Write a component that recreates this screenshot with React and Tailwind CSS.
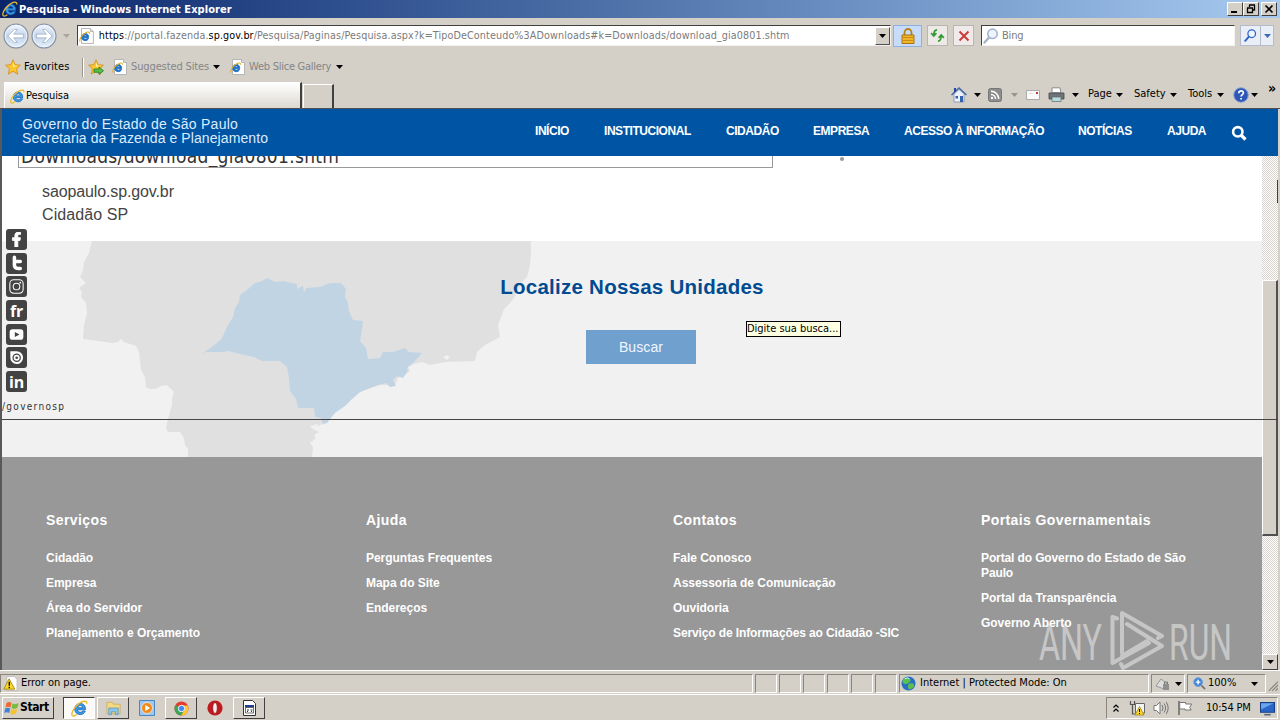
import clsx from "clsx"
import { FaFacebookF } from "react-icons/fa"

const ui = "font-['DejaVu_Sans_Condensed','DejaVu_Sans',sans-serif]"

const IeLogo = ({ className }) => (
  <svg viewBox="0 0 16 16" className={className}>
    <path d="M13.6 9.2H6.2c.2 1.500 1.300 2.300 2.600 2.300 1 0 1.700-.4 2.200-1.100h2.400c-.8 2.200-2.500 3.300-4.700 3.300-3 0-5.200-2.100-5.200-5.200S5.800 3.200 8.700 3.200c3.200 0 5.100 2.500 4.900 6zM6.300 7.300h4.800c-.2-1.300-1.100-2.100-2.400-2.100-1.300 0-2.200.8-2.400 2.100z" fill="#3a9ae6" stroke="#1b66b8" strokeWidth=".8" />
    <path d="M1.200 14.600C-.3 12.500 3 6.600 7.800 3.200 11.500.6 15.200.2 14.800 3.500" fill="none" stroke="#e8b92c" strokeWidth="1.300" />
    <path d="M1.200 14.600c1 .9 2.800.1 4.200-.9" fill="none" stroke="#e8b92c" strokeWidth="1.300" />
  </svg>
)

const PageLogo = ({ className }) => (
  <svg viewBox="0 0 16 16" className={className}>
    <path d="M2.500 .5h9l3 3v12h-12z" fill="#fff" stroke="#b5b5b5" />
    <path d="M11.500 .5v3h3" fill="#dde" stroke="#b5b5b5" />
    <path d="M9.700 9.600H4.600c.2 1 .9 1.600 1.800 1.600.7 0 1.200-.3 1.500-.8h1.700c-.6 1.500-1.800 2.300-3.300 2.300-2.100 0-3.700-1.500-3.700-3.600s1.600-3.700 3.700-3.700c2.200 0 3.600 1.800 3.400 4.200zM4.700 8.300h3.200c-.2-.9-.8-1.400-1.600-1.400S4.900 7.400 4.700 8.300z" fill="#1c6fc4" stroke="#1c6fc4" strokeWidth=".9" />
    <path d="M1 13.500C0 11.500 2.500 7.500 6 5.200c2.600-1.700 4.800-1.600 4.500.6" fill="none" stroke="#e3b022" strokeWidth="1.100" />
  </svg>
)

const Caret = ({ className = "text-black" }) => (
  <svg viewBox="0 0 7 4" className={clsx("w-[7px] h-[4px] shrink-0", className)}>
    <path d="M0 0h7L3.500 4z" fill="currentColor" />
  </svg>
)

const NavArrow = ({ flip }) => (
  <svg viewBox="0 0 24 24" className={clsx("size-[26px] shrink-0", flip && "rotate-180")}>
    <defs>
      <linearGradient id={flip ? "nf" : "nb"} x1="0" y1={flip ? "1" : "0"} x2="0" y2={flip ? "0" : "1"}>
        <stop offset="0" stopColor="#f4f8fd" />
        <stop offset=".5" stopColor="#c3d4ea" />
        <stop offset="1" stopColor="#e4f1fb" />
      </linearGradient>
    </defs>
    <circle cx="12" cy="12" r="11" fill={flip ? "url(#nf)" : "url(#nb)"} stroke="#8793a6" strokeWidth="1.200" />
    <circle cx="12" cy="12" r="10" fill="none" stroke="#f3f8ff" strokeWidth=".8" />
    <path d="M4.500 12l6-6h2.800L9.800 10.300h9v3.400h-9l3.500 4.300h-2.800z" fill="#fff" stroke="#8fa3bf" strokeWidth=".6" />
  </svg>
)

const Star = ({ className, add }) => (
  <svg viewBox="0 0 16 16" className={className}>
    <path d="M8 .8l2.200 4.900 5.200.5-3.900 3.600 1.200 5.300L8 12.300l-4.700 2.800 1.200-5.300L.6 6.200l5.200-.5z" fill="#fcc62f" stroke="#d48a14" strokeWidth=".8" />
    <path d="M8 3l1.400 3.400 3 .4L8 8z" fill="#fff0a0" />
    {add && <path d="M6 10h5V8l4.500 3.700L11 15.500v-2.300H6z" fill="#58c045" stroke="#217a1c" strokeWidth=".8" />}
  </svg>
)

const Lens = ({ className }) => (
  <svg viewBox="0 0 16 16" className={className}>
    <circle cx="9.500" cy="5.800" r="4.700" fill="#eef5ff" stroke="currentColor" strokeWidth="1.600" />
    <path d="M6 9.500L1.500 14.500" stroke="currentColor" strokeWidth="2.400" strokeLinecap="round" />
  </svg>
)

const TitleBar = () => (
  <div className={clsx(ui, "h-[18px] flex items-center pl-[2px] pr-[3px] bg-gradient-to-r from-[#0a246a] to-[#a6caf0]")}>
    <IeLogo className="size-4" />
    <p className="ml-[1px] text-[11px] leading-[17px] font-bold text-white tracking-[0.06px] whitespace-nowrap grow">Pesquisa - Windows Internet Explorer</p>
    {["min", "max", "close"].map((b) => (
      <div key={b} className={clsx("w-4 h-[14px] bg-[#d4d0c8] border border-t-white border-l-white border-r-[#404040] border-b-[#404040]", b === "close" && "ml-[2px]")}>
        <svg viewBox="0 0 14 12" className="block w-[14px] h-[12px]" fill="none" stroke="#000">
          {b === "min" && <path d="M3 9h6" strokeWidth="2" />}
          {b === "max" && <path d="M5 2h6M5.500 2v2M10.500 2v5H9M3 5h6M3.500 5v4.500h5V5" strokeWidth="1.300" />}
          {b === "close" && <path d="M3.500 2.500l7 7M10.500 2.500l-7 7" strokeWidth="1.700" />}
        </svg>
      </div>
    ))}
  </div>
)

const AddressBar = () => (
  <div className={clsx(ui, "h-[35px] flex items-center pl-[2px] text-[11px]")}>
    <div className="flex w-[58px] gap-[2px] pl-px"><NavArrow /><NavArrow flip /></div>
    <div className="w-[12px] flex justify-center"><Caret className="text-[#aaa59c]" /></div>
    <div className="w-[814px] h-[21px] ml-[5px] flex items-center bg-white border border-t-[#404040] border-l-[#404040] border-[#f4f2ee]">
      <PageLogo className="size-4 ml-[1px]" />
      <p className="ml-[4px] pt-px w-[783px] text-[10.700px] text-[#7b7b7b] tracking-[0.110px] whitespace-nowrap">
        <span className="text-black">https</span>://portal.fazenda.<span className="text-black">sp.gov.br</span>/Pesquisa/Paginas/Pesquisa.aspx?k=TipoDeConteudo%3ADownloads#k=Downloads/download_gia0801.shtm
      </p>
      <div className="w-[15px] h-[18px] shrink-0 flex items-center justify-center bg-[#d4d0c8] border border-t-white border-l-white border-r-[#505050] border-b-[#505050]"><Caret /></div>
    </div>
    <div className="w-[29px] h-[22px] ml-[2px] flex items-center justify-center bg-[#c6dcfa] border border-[#8eb1e2]">
      <svg viewBox="0 0 14 16" className="w-[14px] h-4">
        <path d="M3.500 8V4.500a3.500 3.500 0 017 0V8" fill="none" stroke="#b98212" strokeWidth="1.800" />
        <path d="M1 7h12v8.500H1z" fill="#f0b52b" stroke="#a9720c" />
        <path d="M1.500 9.500h11M1.500 12.500h11" stroke="#c98d18" />
      </svg>
    </div>
    <div className="w-[21px] h-[21px] ml-[5px] flex items-center justify-center bg-[#ece9e6] border border-[#b9b6b2]">
      <svg viewBox="0 0 16 16" className="size-[15px]" fill="none" stroke="#2f9a2d" strokeWidth="1.700">
        <path d="M7.500 2C4.500 2 4 4 4 8M1.200 5.500L4 8.500l2.800-3" />
        <path d="M8.500 14c3 0 3.500-2 3.500-6M9.200 10.500L12 7.500l2.800 3" />
      </svg>
    </div>
    <div className="w-[21px] h-[21px] ml-[5px] flex items-center justify-center bg-[#f0ebea] border border-[#b9b6b2]">
      <svg viewBox="0 0 12 12" className="size-[12px]"><path d="M1.500 1.500l9 9M10.500 1.500l-9 9" stroke="#cc3b3b" strokeWidth="2" /></svg>
    </div>
    <div className="w-[254px] h-[21px] ml-[7px] flex items-center bg-white border border-t-[#404040] border-l-[#404040] border-[#f4f2ee]">
      <Lens className="size-4 ml-[1px] text-[#a6b4c8]" />
      <p className="ml-[3px] pt-[2px] text-[#7b7b7b] tracking-[-0.2px]">Bing</p>
    </div>
    <div className="w-[21px] h-[21px] ml-[5px] flex items-center justify-center bg-[#e9eef7] border border-[#b4bccb]"><Lens className="size-[13px] text-[#2f63c9]" /></div>
    <div className="w-[13px] h-[21px] flex items-center justify-center bg-[#e9eef7] border border-l-0 border-[#b4bccb]"><Caret className="text-[#3b6cb8]" /></div>
  </div>
)

const FavoritesBar = () => (
  <div className={clsx(ui, "h-[28px] flex items-center pl-[5px] text-[11px] whitespace-nowrap")}>
    <Star className="size-4" />
    <p className="ml-[3px] w-[58px] tracking-[0.1px]">Favorites</p>
    <div className="w-px h-[19px] bg-[#9a968e] border-r border-white box-content" />
    <Star className="size-4 ml-[4px]" add />
    <PageLogo className="size-4 ml-[8px]" />
    <p className="ml-[3px] w-[82px] text-[#858585] tracking-[-0.120px]">Suggested Sites</p>
    <Caret />
    <PageLogo className="size-4 ml-[10px]" />
    <p className="ml-[3px] w-[87px] text-[#858585] tracking-[-0.250px]">Web Slice Gallery</p>
    <Caret />
  </div>
)

const TabBar = () => (
  <div className={clsx(ui, "h-[27px] flex items-end pl-[4px] text-[11px] whitespace-nowrap")}>
    <div className="w-[298px] h-[26px] flex items-center pl-[5px] pt-[2px] bg-gradient-to-b from-white to-[#dcd8d1] border-l border-t border-white border-r-2 border-r-[#404040]">
      <IeLogo className="size-[15px]" />
      <p className="ml-[1px] tracking-[-0.05px]">Pesquisa</p>
    </div>
    <div className="w-[31px] h-[24px] ml-px border-l border-t border-white border-r-2 border-r-[#404040]" />
    <div className="h-[27px] grow flex items-center pl-[617px]">
      <svg viewBox="0 0 16 16" className="size-4">
        <path d="M3 7v8h10V7L8 2.500z" fill="#eef3fb" stroke="#6b83ab" strokeWidth=".7" />
        <path d="M.5 8L8 1l7.500 7" fill="none" stroke="#4469a6" strokeWidth="1.500" />
        <path d="M3 1h2v3L3 5.500z" fill="#23479a" />
        <path d="M9 9h3v6H9z" fill="#3462ae" /><path d="M4.500 9h2.500v2.500H4.500z" fill="#3462ae" />
      </svg>
      <div className="w-[21px] flex justify-center"><Caret /></div>
      <svg viewBox="0 0 14 14" className="size-[14px]">
        <rect x=".5" y=".5" width="13" height="13" rx="2" fill="#8d8d8d" stroke="#777" />
        <path d="M3 6.500a4.500 4.500 0 014.500 4.500M3 3.300A7.700 7.700 0 0110.700 11" fill="none" stroke="#fff" strokeWidth="1.500" /><circle cx="4" cy="10" r="1.200" fill="#fff" />
      </svg>
      <div className="w-[24px] flex justify-center"><Caret className="text-[#98948c]" /></div>
      <svg viewBox="0 0 14 10" className="w-[14px] h-[10px]"><path d="M.5 .5h13v9H.5z" fill="#fafafa" stroke="#aaa" /><path d="M3 3.500h4" stroke="#ddd" /><path d="M10 2h2v2h-2z" fill="#c33" /></svg>
      <svg viewBox="0 0 17 16" className="w-[17px] h-4 ml-[8px]">
        <path d="M4 .8h8l1 5H4z" fill="#fff" stroke="#8b8b8b" /><path d="M1 6h15v6H1z" fill="#6f7277" stroke="#44474c" strokeWidth=".8" />
        <path d="M4 10h9v4.500H4z" fill="#b5dde0" stroke="#666" strokeWidth=".7" />
      </svg>
      <div className="w-[20px] flex justify-center"><Caret /></div>
      <p className="ml-[3px] w-[28px]">Page</p><Caret />
      <p className="ml-[11px] w-[36px]">Safety</p><Caret />
      <p className="ml-[11px] w-[29px]">Tools</p><Caret />
      <svg viewBox="0 0 16 16" className="size-4 ml-[9px]">
        <circle cx="8" cy="8" r="7.300" fill="#2c57b8" stroke="#8ea6cf" />
        <path d="M5.700 6.200C5.700 3 10.600 3.200 10.400 6c-.1 1.600-2.300 1.700-2.300 3.500M8.100 11v1.600" fill="none" stroke="#fff" strokeWidth="1.700" />
      </svg>
      <div className="w-[10px] flex justify-center"><Caret /></div>
      <p className="ml-[9px] mb-[13px] text-[14px] leading-[14px] font-bold">»</p>
    </div>
  </div>
)

const menu = [
  ["INÍCIO", "w-[69px]"],
  ["INSTITUCIONAL", "w-[122px]"],
  ["CIDADÃO", "w-[87px]"],
  ["EMPRESA", "w-[91px]"],
  ["ACESSO À INFORMAÇÃO", "w-[174px]"],
  ["NOTÍCIAS", "w-[89px]"],
  ["AJUDA", "w-[65px]"],
]

const SiteHeader = () => (
  <div className="absolute left-[2px] top-0 w-[1276px] h-[47px] bg-[#0054a4] text-white flex pl-[20px] whitespace-nowrap">
    <div className="w-[513px] pt-[8px] text-[14px] leading-[14px] text-[#dcecff]">
      <p className="tracking-[0.250px]">Governo do Estado de São Paulo</p>
      <p className="tracking-[0.090px]">Secretaria da Fazenda e Planejamento</p>
    </div>
    <div className="flex h-[44px] items-center text-[12px] font-bold tracking-[-0.450px]">
      {menu.map(([label, width]) => <p key={label} className={width}>{label}</p>)}
      <svg viewBox="0 0 16 16" className="size-[16px] mt-[3px] -ml-[1px]" fill="none" stroke="#fff">
        <circle cx="6.800" cy="6.800" r="4.700" strokeWidth="2.600" /><path d="M10.500 10.500l4 4" strokeWidth="3.200" />
      </svg>
    </div>
  </div>
)

const SaoPauloMap = () => (
  <svg viewBox="2 241 598 216" className="absolute left-0 top-0 w-[598px] h-[216px]">
    <path fill="#e0e0e0" d="M92 241L89 253 84 262 83 270 80 277 86 283 79 288 82 292 81 297 86 303 87 313 84 325 83 339 91 340 112 343 118 342 121 339 124 342 136 346 139 352 141 370 145 377 146 387 150 389 155 389 161 386 167 385 174 392 172 398 172 405 168 419 166 428 168 432 180 432 184 438 185 445 188 449V457H312L313 447 310 443 316 438 314 435 319 432 314 429 320 425 324 424 333 413 345 403 360 392 380 385 395 385 398 378 404 375 410 371 408 367 414 364 422 362 430 365 445 362 475 361 477 352 485 345 500 337 498 325 501 317 504 309 510 303 514 298 518 290 522 282 527 277 530 265 531 253V241Z" />
    <path fill="#f1f1f1" d="M443 357l4-2 3 2-3 3zM310 426l8-2-1 7-4-2z" />
    <path fill="#c1d4e4" d="M203 353L217 343 222 338 228 325 233 317 235 308 239 302 240 295 247 290 255 283 262 281 267 278 275 282 283 281 297 284 297 289 303 286 304 293 306 288 320 287 330 283 341 283 346 289 345 297 348 303 349 311 353 320 363 321 362 330 360 341 366 348 368 359 380 358 383 352 393 352 405 348 409 352 422 353 415 361 407 368 408 371 403 378 397 376 393 380 396 386 390 387 386 383 378 385 370 388 360 392 351 400 345 406 335 413 327 423 323 424 321 418 315 417 314 408 298 408 296 399 290 391 289 378 287 367 280 361 262 361 254 357 240 354 228 351 223 352 207 352Z" />
  </svg>
)

const square = "size-[21px] rounded-[3px] bg-[#434343] flex items-center justify-center text-white font-bold text-[16px] leading-[18px] tracking-[-0.300px] font-['Open_Sans',sans-serif]"

const SocialBar = () => (
  <div className="absolute left-[2px] top-[120px] w-[1276px] h-[191px] border-b border-[#444] pointer-events-none">
    <div className="flex flex-col gap-[2.700px] pl-[4px]">
      <div className={square}><FaFacebookF className="size-[15px] stroke-white stroke-[30px]" /></div>
      <div className={square}>
        <svg viewBox="0 0 20 20" className="size-[19px]"><path d="M7.800 3.500v8.200c0 2.700 1.600 3.500 3.800 3.500H14M7.800 8H14" fill="none" stroke="#fff" strokeWidth="3.700" strokeLinecap="round" /></svg>
      </div>
      <div className={square}>
        <svg viewBox="0 0 20 20" className="size-[19px]" fill="none" stroke="#fff" strokeWidth="1.100"><rect x="3" y="3" width="14" height="14" rx="4" /><circle cx="10" cy="10" r="3.500" /><circle cx="14" cy="6" r=".4" /></svg>
      </div>
      <div className={square}>fr</div>
      <div className={square}>
        <svg viewBox="0 0 20 20" className="size-[19px]"><rect x="2.800" y="4.500" width="14.400" height="11" rx="3" fill="#fff" /><path d="M8.200 7.300l5 2.700-5 2.700z" fill="#434343" /></svg>
      </div>
      <div className={square}>
        <svg viewBox="0 0 20 20" className="size-[19px]"><path d="M3.500 3.500H10A6.700 6.700 0 113.500 10z" fill="#fff" /><circle cx="10.200" cy="10.300" r="3.800" fill="none" stroke="#434343" strokeWidth="1.300" /><circle cx="10.200" cy="10.300" r="1.400" fill="#434343" /></svg>
      </div>
      <div className={square}>in</div>
    </div>
    <p className={clsx(ui, "mt-[8px] text-[10px] leading-[14px] tracking-[1.300px] text-[#333]")}>/governosp</p>
  </div>
)

const footer = [
  { title: "Serviços", width: "w-[320px]", links: ["Cidadão", "Empresa", "Área do Servidor", "Planejamento e Orçamento"] },
  { title: "Ajuda", width: "w-[307px]", links: ["Perguntas Frequentes", "Mapa do Site", "Endereços"] },
  { title: "Contatos", width: "w-[308px]", links: ["Fale Conosco", "Assessoria de Comunicação", "Ouvidoria", "Serviço de Informações ao Cidadão -SIC"] },
  { title: "Portais Governamentais", width: "w-[215px]", links: ["Portal do Governo do Estado de São Paulo", "Portal da Transparência", "Governo Aberto"] },
]

const Footer = () => (
  <div className="h-[213px] bg-[#989898] text-white font-bold flex pl-[44px] pt-[55px]">
    {footer.map((col) => (
      <div key={col.title} className={col.width}>
        <p className="text-[14px] leading-[16px] tracking-[0.400px]">{col.title}</p>
        <div className="mt-[23px] flex flex-col gap-[10px] text-[12px] leading-[15px]">
          {col.links.map((link) => (
            <p key={link} className={link.length > 30 ? "tracking-[-0.120px]" : "tracking-[-0.030px]"}>{link}</p>
          ))}
        </div>
      </div>
    ))}
  </div>
)

const Watermark = () => (
  <svg viewBox="0 0 200 62" className="absolute left-[1036px] top-[501px] w-[200px] h-[62px] opacity-50 overflow-visible">
    <g fill="#f4f4f4" fontFamily="'Roboto', sans-serif" fontSize="50" fontWeight="400">
      <text x="3" y="50" textLength="63" lengthAdjust="spacingAndGlyphs">ANY</text>
      <text x="133" y="50" textLength="63" lengthAdjust="spacingAndGlyphs">RUN</text>
    </g>
    <path
      d="M81 8.500L76.500 7V53L113 33M86 43V3L126 26 122 28M91 14L126 36 87 58 85 54M86 46L111 31"
      fill="none" stroke="#f4f4f4" strokeWidth="4" strokeLinejoin="round" strokeLinecap="round"
    />
  </svg>
)

const Scrollbar = () => (
  <div className="w-[16px] h-[562px] flex flex-col bg-[repeating-conic-gradient(#d8d3cd_0_25%,#fff_0_50%)] bg-[length:2px_2px]">
    <div className="h-[71px]" />
    <div className="h-[23px] border-r border-[#404040]" />
    <div className="h-[77px]" />
    <div className="h-[256px] bg-[#d4d0c8] border border-t-white border-l-white border-r-2 border-b-2 border-r-[#505050] border-b-[#505050]" />
    <div className="grow" />
    <div className="h-[16px] mb-px flex items-center justify-center bg-[#d4d0c8] border border-t-white border-l-white border-r-[#404040] border-b-[#404040]"><Caret /></div>
  </div>
)

const Page = () => (
  <div className="relative h-[562px] flex overflow-hidden border-t border-[#505050] bg-[#d4d0c8] font-['Liberation_Sans',Arial,sans-serif]">
    <div className="w-[2px] bg-[#585858]" />
    <div className="w-[1260px] flex flex-col bg-white">
      <div className="h-[132px] pt-[27px]">
        <div className="flex">
          <div className={clsx(ui, "w-[755px] h-[32px] ml-[16px] pl-[2px] border border-[#999] text-[19px] leading-[39px] tracking-[0.300px] text-[#333] whitespace-nowrap overflow-hidden")}>Downloads/download_gia0801.shtm</div>
          <div className="size-[4px] rounded-full bg-[#999] ml-[67px] mt-[21px]" />
        </div>
        <div className="pl-[40px] pt-[12px] text-[16px] leading-[23px] text-[#444]">
          <p className="tracking-[-0.120px]">saopaulo.sp.gov.br</p>
          <p className="tracking-[0.080px]">Cidadão SP</p>
        </div>
      </div>
      <div className="relative h-[216px] bg-[#f1f1f1]">
        <SaoPauloMap />
        <div className="relative flex flex-col items-center pt-[33px]">
          <p className="text-[20.500px] leading-[26px] font-bold tracking-[0.250px] text-[#004b91]">Localize Nossas Unidades</p>
          <div className="w-[110px] h-[34px] mt-[30px] ml-[18px] flex items-center justify-center bg-[#70a0ce] text-[14px] tracking-[0.1px] text-[#f0f6ff]">Buscar</div>
        </div>
      </div>
      <Footer />
    </div>
    <Scrollbar />
    <SiteHeader />
    <SocialBar />
    <div className={clsx(ui, "absolute left-[746px] top-[212px] w-[95px] h-[16px] border border-black bg-[#ffffe1] text-[11px] leading-[14px] whitespace-nowrap tracking-[-0.020px]")}>Digite sua busca...</div>
    <Watermark />
  </div>
)

const cell = "h-[19px] border border-t-[#8a867e] border-l-[#8a867e] border-r-white border-b-white flex items-center shrink-0"

const StatusBar = () => (
  <div className={clsx(ui, "h-[24px] pt-[2px] flex items-center gap-[2px] text-[11px] whitespace-nowrap border-t border-white")}>
    <div className={clsx(cell, "w-[753px] pl-[2px]")}>
      <svg viewBox="0 0 16 16" className="size-[15px]"><path d="M4 .5h8l3 3v12H4z" fill="#fff" stroke="#bbb" /><path d="M6.500 3L12.500 14H.8z" fill="#fbd92b" stroke="#a98b08" /><path d="M6.700 6v4.500M6.700 11.500V13" stroke="#000" strokeWidth="1.400" /></svg>
      <p className="ml-[3px] tracking-[-0.050px]">Error on page.</p>
    </div>
    {[1, 2, 3, 4, 5, 6].map((n) => <div key={n} className={clsx(cell, "w-[22px]")} />)}
    <div className={clsx(cell, "w-[250px] pl-[1px]")}>
      <svg viewBox="0 0 16 16" className="size-[15px]"><circle cx="8" cy="8" r="7.500" fill="#2b6fc4" /><path d="M3 3c3-2 6-1 7 1s-2 3-3 4-4 1-5-1 0-3 1-4zM9 8c3-1 5 0 5 2s-3 4-5 4-2-5 0-6z" fill="#5cc04c" /><path d="M4 3q3-2 5 0" stroke="#dff" fill="none" /></svg>
      <p className="ml-[4px]">Internet | Protected Mode: On</p>
    </div>
    <div className={clsx(cell, "w-[34px] pl-[3px]")}>
      <svg viewBox="0 0 16 14" className="w-[16px] h-[14px]"><path d="M1 9l5-7 6 5-3 5z" fill="#ddd" stroke="#888" strokeWidth=".8" /><path d="M8 7h6v6H8z" fill="#8f8f8f" /><path d="M9.500 7V5h3v2" fill="none" stroke="#777" /></svg>
      <div className="ml-[4px]"><Caret /></div>
    </div>
    <div className={clsx(cell, "w-[79px] pl-[5px]")}>
      <svg viewBox="0 0 14 14" className="size-[13px]"><circle cx="5.500" cy="5.500" r="4.700" fill="#3c86e0" stroke="#7b9cc8" /><path d="M5.500 3v5M3 5.500h5" stroke="#fff" strokeWidth="1.500" /><path d="M9 9l4 4" stroke="#777" strokeWidth="2" /></svg>
      <p className="ml-[2px] w-[43px]">100%</p>
      <Caret />
    </div>
    <svg viewBox="0 0 12 16" className="w-[10px] h-[16px] shrink-0 mt-[3px]" stroke="#8a867e" strokeWidth="1.500"><path d="M1 15L12 4M5 15l7-7M9 15l3-3" /></svg>
  </div>
)

const task = "w-[32px] h-[22px] flex items-center justify-center shrink-0"
const raised = "bg-[#d4d0c8] border border-t-white border-l-white border-r-[#404040] border-b-[#404040]"

const TaskBar = () => (
  <div className={clsx(ui, "h-[26px] pt-[1px] flex items-center text-[11px] whitespace-nowrap border-t border-white")}>
    <div className={clsx(raised, "w-[52px] h-[22px] ml-[2px] flex items-center pl-[1px]")}>
      <svg viewBox="0 0 16 16" className="size-[16px]">
        <path d="M2.500 3q2.500-2 5 0L6.500 7.500q-2.500-1.700-5 0z" fill="#ef6a2f" /><path d="M8.500 3.400q3 1.700 6-.4L13.400 7.700q-3 2-5.900.2z" fill="#78bb3c" />
        <path d="M1.200 8.500q2.500-1.700 5 0L5.200 13q-2.500-1.700-5 0z" fill="#3f83d8" /><path d="M7.200 8.900q3 1.700 6-.2L12 13.400q-3 2-5.900 0z" fill="#f6c22f" />
      </svg>
      <p className="font-bold text-[12px] leading-[16px] pb-[2px] tracking-[-0.400px]">Start</p>
    </div>
    <div className={clsx(task, "ml-[9px] bg-[#fbfaf8] border border-t-[#404040] border-l-[#404040] border-white")}><IeLogo className="size-[17px]" /></div>
    <div className={clsx(task, raised, "ml-[2px]")}>
      <svg viewBox="0 0 18 16" className="w-[17px] h-4"><path d="M2 2h6l1 2h7v10H2z" fill="#f4d981" stroke="#c4a14a" strokeWidth=".7" /><path d="M4 15V8h10v7h-3v-3H7v3z" fill="#8cc5ea" stroke="#4b8fc0" strokeWidth=".7" /></svg>
    </div>
    <div className={clsx(task, "ml-[2px]")}>
      <svg viewBox="0 0 16 16" className="size-4"><path d="M.5 .5h15v15H.5z" fill="#9cc9f2" stroke="#4b86c2" /><circle cx="8" cy="8" r="5.500" fill="#f08a1c" stroke="#fff" strokeWidth=".6" /><path d="M6.300 5l4.700 3-4.700 3z" fill="#fff" /></svg>
    </div>
    <div className={clsx(task, raised, "ml-[2px]")}>
      <svg viewBox="0 0 16 16" className="size-[15px]"><circle cx="8" cy="8" r="7.500" fill="#e33b2e" /><path d="M8 8L1.500 4.300A7.500 7.500 0 007.500 15.500l3.800-6.300z" fill="#3aa655" /><path d="M8 8l3.300 1.500-3.800 6A7.500 7.500 0 0014.700 4.800H8z" fill="#fbc92e" /><circle cx="8" cy="8" r="3.400" fill="#4586ef" stroke="#fff" /></svg>
    </div>
    <div className={clsx(task, "ml-[2px]")}>
      <svg viewBox="0 0 16 16" className="size-4"><circle cx="8" cy="8" r="7.600" fill="#c01a1f" /><ellipse cx="8" cy="8" rx="2.300" ry="5.500" fill="#f7eceb" stroke="#7d0e12" strokeWidth=".7" /></svg>
    </div>
    <div className={clsx(task, raised, "ml-[2px]")}>
      <svg viewBox="0 0 16 16" className="size-4"><path d="M2.500 .5h9l3 3v12h-12z" fill="#fff" stroke="#333" /><path d="M4 5h9v2.500H4z" fill="#1d3f93" /><path d="M4.500 7.500h8V13h-8z" fill="#fff" stroke="#333" strokeWidth=".7" /><path d="M6 10h2M9.500 10h2M6 11.500h1M10 11.500h1" stroke="#333" /></svg>
    </div>
    <div className="ml-auto mr-[2px] w-[172px] h-[22px] flex items-center border border-t-[#8a867e] border-l-[#8a867e] border-white pl-[6px]">
      <svg viewBox="0 0 6 8" className="w-[6px] h-[8px]" fill="none" stroke="#000" strokeWidth="1.200"><path d="M.5 3.500L3 1l2.500 2.500M.5 7.500L3 5l2.500 2.500" /></svg>
      <svg viewBox="0 0 16 16" className="size-4 ml-[10px]"><path d="M1.500 1v3.500h4V1M3.500 4.500V14h3" fill="none" stroke="#555" strokeWidth="1.200" /><path d="M6.500 3.500h9V13h-9z" fill="#f3f3f3" stroke="#666" /><path d="M10.500 6.500L15 15H6z" fill="#fbd72b" stroke="#94780a" strokeWidth=".7" /><path d="M10.500 9v3M10.500 13v1" stroke="#000" /></svg>
      <svg viewBox="0 0 16 16" className="size-4 ml-[8px]" fill="none" stroke="#777"><path d="M1 5.500h2.500L7 2v12l-3.500-3.500H1z" fill="#fff" /><path d="M9 5q2 3 0 6M11 3.500q3.300 4.500 0 9M13.200 2q4 6 0 12" /></svg>
      <svg viewBox="0 0 16 16" className="size-4 ml-[8px]"><path d="M2 1v14" stroke="#666" strokeWidth="1.500" /><path d="M2.700 2.500h6v1.500h6l-2 3.500 1.500 2.500H8V9H2.700z" fill="#fff" stroke="#777" /></svg>
      <p className="ml-[13px] w-[50px] text-[11px] tracking-[-0.200px]">10:54 PM</p>
      <svg viewBox="0 0 14 14" className="size-[15px] ml-[4px]"><path d="M.5 1.500h13v9H.5z" fill="#2a66c8" stroke="#173f86" /><path d="M1 2h12L1 8z" fill="#6aa5ee" /><path d="M4 12h6v1.500H4z" fill="#567" /></svg>
    </div>
  </div>
)

export default function App() {
  return (
    <div className="w-[1280px] h-[720px] overflow-hidden flex flex-col bg-[#d4d0c8] text-black">
      <TitleBar />
      <AddressBar />
      <FavoritesBar />
      <TabBar />
      <Page />
      <StatusBar />
      <TaskBar />
    </div>
  )
}
